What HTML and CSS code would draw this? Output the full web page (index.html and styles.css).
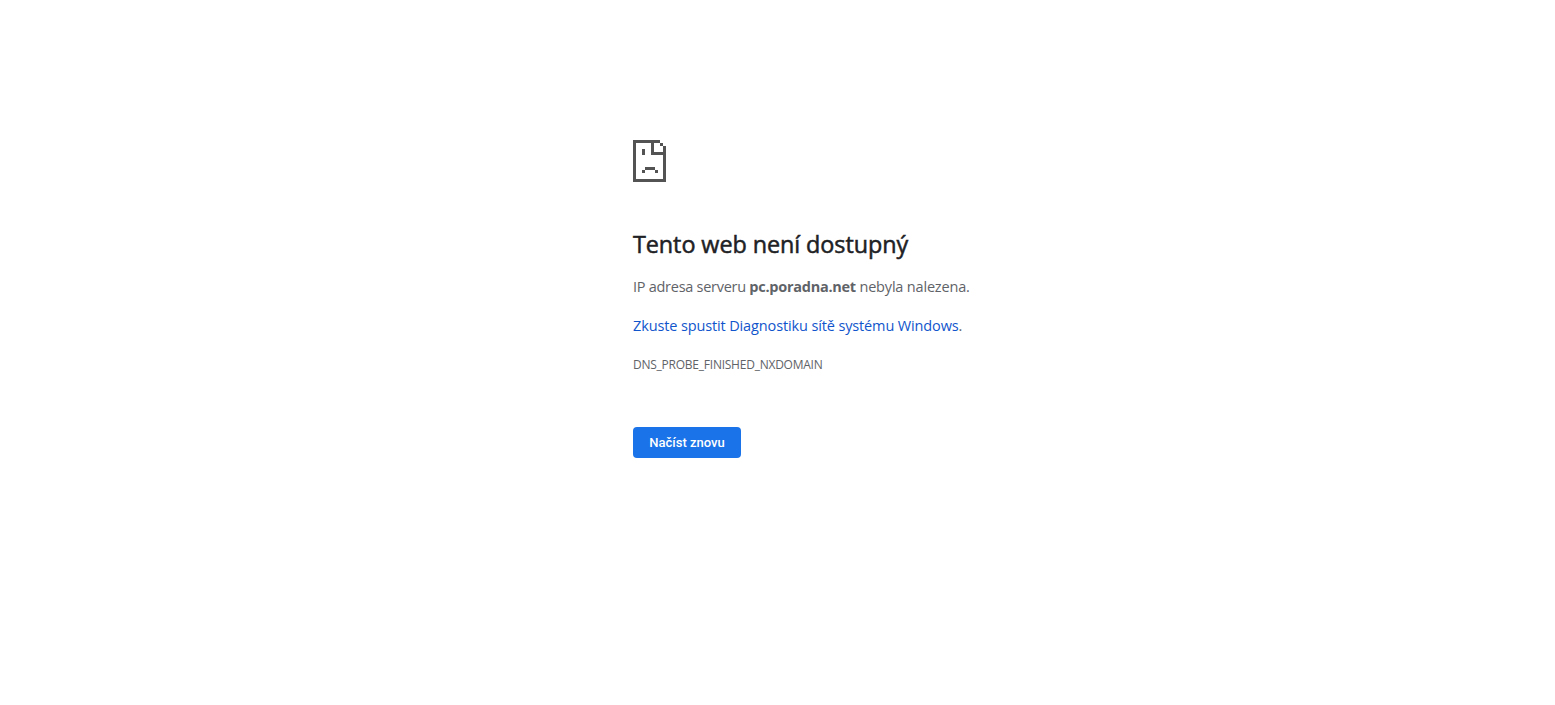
FILE: index.html
```
<!DOCTYPE html>
<html lang="cs">
<head>
<meta charset="utf-8">
<title>pc.poradna.net</title>
<link rel="stylesheet" href="styles.css">
</head>
<body>
<main class="error-page">
  <svg class="icon" width="33" height="42" viewBox="0 0 33 42" shape-rendering="crispEdges" aria-hidden="true">
    <path fill="#535353" d="M0 0H27V3H21V12H33V42H0ZM3 3V39H30V15H18V3ZM27 3H30V6H27ZM30 6H33V12H30ZM9 9H12V15H9ZM12 27H22V30H12ZM9 30H12V33H9ZM22 30H25V33H22Z" fill-rule="evenodd"/>
  </svg>
  <h1 class="title">Tento web není dostupný</h1>
  <p class="summary">IP adresa serveru <strong>pc.poradna.net</strong><span class="summary-end"> nebyla nalezena.</span></p>
  <p class="suggestion"><a class="link">Zkuste spustit Diagnostiku sítě systému Windows</a>.</p>
  <div class="code">DNS_PROBE_FINISHED_NXDOMAIN</div>
  <button class="reload">Načíst znovu</button>
</main>
</body>
</html>
```
FILE: styles.css
```
body {
  margin: 0;
  background: #fff;
  color: #5f6368;
  font-family: "Segoe UI", "Open Sans", "Noto Sans", sans-serif;
  font-size: 14.5px;
  line-height: 24px;
}
.error-page {
  width: 600px;
  padding-top: 140px;
  margin-left: 633px;
}
.icon { display: block; }
.title {
  margin: 46px 0 0;
  height: 33px;
  color: #202124;
  font-size: 23.4px;
  font-weight: 400;
  line-height: 32px;
  letter-spacing: -0.08px;
  -webkit-text-stroke: 0.5px #202124;
}
.summary {
  margin: 14px 0 0;
  letter-spacing: -0.27px;
  white-space: nowrap;
}
.summary-end { letter-spacing: -0.18px; }
.suggestion {
  margin: 15px 0 0;
  letter-spacing: -0.13px;
  white-space: nowrap;
}
.link { color: #1155cc; }
.code {
  margin-top: 15px;
  font-size: 12px;
  letter-spacing: -0.24px;
}
.reload {
  display: block;
  box-sizing: border-box;
  width: 108px;
  height: 31px;
  margin-top: 50px;
  padding: 0;
  border: 0;
  border-radius: 4px;
  background: #1a73e8;
  color: #fff;
  font: 500 13px/31px Roboto, sans-serif;
}
```
